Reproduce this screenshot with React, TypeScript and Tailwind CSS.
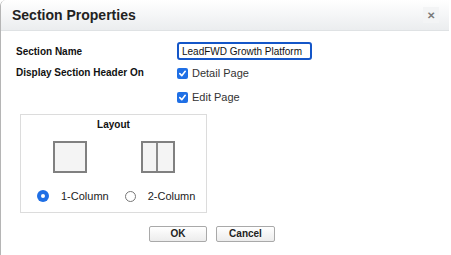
import React from "react";

function Check({ label }: { label: string }) {
  return (
    <div className="flex h-[12px] items-center gap-[4px]">
      <span className="flex h-[11px] w-[11px] items-center justify-center rounded-[2px] bg-[#1f6fe5]">
        <svg width="9" height="9" viewBox="0 0 10 10" fill="none">
          <path d="M2 5.2 L4.2 7.4 L8 2.6" stroke="white" strokeWidth="1.8" strokeLinecap="round" strokeLinejoin="round" />
        </svg>
      </span>
      <span className="text-[11px] leading-none text-[#333]">{label}</span>
    </div>
  );
}

function Radio({ checked, label }: { checked?: boolean; label: string }) {
  return (
    <div className="flex h-[12px] items-center gap-[12px]">
      {checked ? (
        <span className="flex h-[12px] w-[12px] items-center justify-center rounded-full bg-[#1f6fe5]">
          <span className="h-[4px] w-[4px] rounded-full bg-white" />
        </span>
      ) : (
        <span className="h-[11px] w-[11px] rounded-full border border-[#777] bg-white" />
      )}
      <span className="text-[11px] leading-none text-[#222]">{label}</span>
    </div>
  );
}

export default function App() {
  return (
    <div className="h-[255px] w-[451px] overflow-hidden bg-white font-['Liberation_Sans',Arial,sans-serif]">
      <div className="h-full w-[449px] overflow-hidden rounded-tl-[6px] border-l border-[#b5b5b5] bg-white">
        <div className="flex h-[31px] items-center justify-between border-b border-[#dfe2e4] bg-gradient-to-b from-white to-[#ebedef] pl-[11px] pr-[10px]">
          <h1 className="text-[14px] font-bold text-[#222]">Section Properties</h1>
          <button className="flex h-[16px] w-[16px] items-center justify-center bg-[#f3f4f5] text-[10px] font-bold text-[#7a7a7a]">
            ✕
          </button>
        </div>

        <div className="pl-[15px] pt-[11px]">
          <div className="flex items-center">
            <span className="w-[161px] text-[10px] font-bold text-[#111]">Section Name</span>
            <input
              readOnly
              value="LeadFWD Growth Platform"
              className="h-[18px] w-[135px] rounded-[3px] border-2 border-[#1456c8] px-[3px] text-[10px] text-[#111] outline-none"
            />
          </div>
          <div className="mt-[7px] flex items-start">
            <span className="h-[12px] w-[161px] text-[10px] font-bold leading-[12px] text-[#111]">
              Display Section Header On
            </span>
            <div className="flex flex-col gap-[12px]">
              <Check label="Detail Page" />
              <Check label="Edit Page" />
            </div>
          </div>

          <div className="ml-[4px] mt-[11px] flex h-[99px] w-[187px] flex-col items-center border border-[#dcdcdc] pt-[2px]">
            <span className="text-[10px] font-bold leading-[15px] text-[#111]">Layout</span>
            <div className="mt-[9px] flex gap-[54px]">
              <div className="h-[32px] w-[34px] border-2 border-[#808080] bg-[#f4f4f4]" />
              <div className="flex h-[32px] w-[34px] border-2 border-[#808080] bg-[#f4f4f4]">
                <div className="h-full w-1/2 border-r-2 border-[#8a8a8a]" />
              </div>
            </div>
            <div className="mt-[17px] flex w-full gap-[16px] pl-[16px]">
              <Radio checked label="1-Column" />
              <Radio label="2-Column" />
            </div>
          </div>

          <div className="mt-[13px] flex gap-[9px] pl-[133px]">
            <button className="h-[16px] w-[58px] rounded-[2px] border border-[#a9a9a9] bg-gradient-to-b from-white to-[#ececec] text-[10px] font-bold leading-none text-[#222]">
              OK
            </button>
            <button className="h-[16px] w-[59px] rounded-[2px] border border-[#a9a9a9] bg-gradient-to-b from-white to-[#ececec] text-[10px] font-bold leading-none text-[#222]">
              Cancel
            </button>
          </div>
        </div>
      </div>
    </div>
  );
}
